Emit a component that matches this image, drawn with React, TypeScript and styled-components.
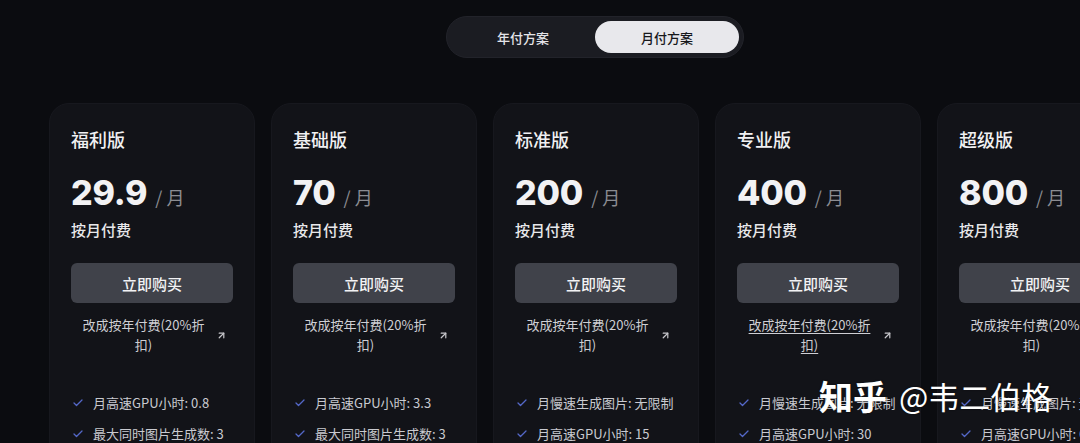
import React from "react";
import styled, { createGlobalStyle } from "styled-components";
import { Check, ArrowUpRight } from "lucide-react";

const Global = createGlobalStyle`
  html, body { margin: 0; padding: 0; background: #0b0c10; }
  body { font-family: Inter, "Noto Sans CJK SC", sans-serif; overflow: hidden; }
  * { box-sizing: border-box; }
`;

const Page = styled.div`
  position: relative;
  width: 1080px;
  height: 443px;
  overflow: hidden;
  background: #0b0c10;
  padding-top: 16px;
`;

const ToggleRow = styled.div`
  display: flex;
  padding-left: 446px;
`;

const Toggle = styled.div`
  display: flex;
  width: 298px;
  height: 42px;
  padding: 4px;
  border-radius: 21px;
  background: #1b1c22;
  border: 1px solid #22232a;
`;

const ToggleOption = styled.div<{ $active?: boolean }>`
  flex: 1;
  display: flex;
  align-items: center;
  justify-content: center;
  border-radius: 18px;
  font-family: "Noto Sans CJK SC", sans-serif;
  font-size: 13px;
  font-weight: 500;
  color: ${(p) => (p.$active ? "#17181c" : "#e4e4e8")};
  background: ${(p) => (p.$active ? "#e8e8ec" : "transparent")};
`;

const Cards = styled.div`
  display: flex;
  gap: 16px;
  padding-left: 49px;
  margin-top: 45px;
`;

const Card = styled.div`
  flex: 0 0 206px;
  height: 400px;
  border-radius: 20px;
  background: #121318;
  border: 1px solid #17181e;
  padding: 22px 21px 0 21px;
  display: flex;
  flex-direction: column;
`;

const Title = styled.div`
  font-family: "Noto Sans CJK SC", sans-serif;
  font-size: 18px;
  line-height: 26px;
  font-weight: 500;
  color: #f0f0f2;
`;

const PriceRow = styled.div`
  display: flex;
  align-items: baseline;
  margin-top: 19px;
  height: 44px;
`;

const Price = styled.span`
  font-family: Inter, sans-serif;
  font-size: 34px;
  line-height: 44px;
  font-weight: 800;
  color: #f2f2f4;
  letter-spacing: -0.2px;
`;

const Unit = styled.span`
  font-family: "Noto Sans CJK SC", sans-serif;
  font-size: 18px;
  color: #8b8c92;
  margin-left: 8px;
`;

const Billing = styled.div`
  font-family: "Noto Sans CJK SC", sans-serif;
  font-size: 15px;
  line-height: 22px;
  font-weight: 500;
  color: #e8e8ea;
  margin-top: 4px;
`;

const BuyButton = styled.button`
  margin-top: 22px;
  height: 40px;
  width: 100%;
  border: none;
  border-radius: 6px;
  background: #40424a;
  color: #f2f2f4;
  font-family: "Noto Sans CJK SC", sans-serif;
  font-size: 15px;
  font-weight: 500;
  cursor: pointer;
`;

const SwitchLink = styled.div<{ $hover?: boolean }>`
  margin-top: 12px;
  display: flex;
  align-items: center;
  justify-content: center;
  gap: 6px;
  color: #cfcfd4;
  font-family: "Noto Sans CJK SC", sans-serif;
  font-size: 13px;
  line-height: 20px;
  span {
    width: 132px;
    text-align: center;
    text-decoration: ${(p) => (p.$hover ? "underline" : "none")};
    text-underline-offset: 3px;
  }
`;

const Features = styled.ul`
  list-style: none;
  margin: 38px 0 0 0;
  padding: 0 0 0 1px;
  display: flex;
  flex-direction: column;
  gap: 11px;
`;

const Feature = styled.li`
  display: flex;
  align-items: center;
  gap: 9px;
  font-family: "Noto Sans CJK SC", sans-serif;
  font-size: 13px;
  line-height: 20px;
  color: #c9cad0;
  white-space: nowrap;
`;

const Watermark = styled.div`
  position: absolute;
  left: 819px;
  top: 374px;
  display: flex;
  align-items: center;
  gap: 12px;
  font-family: "Noto Sans CJK SC", sans-serif;
  line-height: 44px;
  color: #ffffff;
  text-shadow: 0 0 2px rgba(0, 0, 0, 0.4);
  white-space: nowrap;
`;

const WatermarkBrand = styled.span`
  font-size: 34px;
  font-weight: 700;
`;

const WatermarkName = styled.span`
  font-size: 31px;
  font-weight: 400;
`;

const plans = [
  { name: "福利版", price: "29.9", features: ["月高速GPU小时: 0.8", "最大同时图片生成数: 3"] },
  { name: "基础版", price: "70", features: ["月高速GPU小时: 3.3", "最大同时图片生成数: 3"] },
  { name: "标准版", price: "200", features: ["月慢速生成图片: 无限制", "月高速GPU小时: 15"] },
  { name: "专业版", price: "400", features: ["月慢速生成图片: 无限制", "月高速GPU小时: 30"], hover: true },
  { name: "超级版", price: "800", features: ["月慢速生成图片: 无限制", "月高速GPU小时: 60"] },
];

export default function App() {
  return (
    <Page>
      <Global />
      <ToggleRow>
        <Toggle>
          <ToggleOption>年付方案</ToggleOption>
          <ToggleOption $active>月付方案</ToggleOption>
        </Toggle>
      </ToggleRow>
      <Cards>
        {plans.map((p) => (
          <Card key={p.name}>
            <Title>{p.name}</Title>
            <PriceRow>
              <Price>{p.price}</Price>
              <Unit>/ 月</Unit>
            </PriceRow>
            <Billing>按月付费</Billing>
            <BuyButton>立即购买</BuyButton>
            <SwitchLink $hover={p.hover}>
              <span>改成按年付费(20%折扣)</span>
              <ArrowUpRight size={11} strokeWidth={2.6} color="#c8c8cc" />
            </SwitchLink>
            <Features>
              {p.features.map((f) => (
                <Feature key={f}>
                  <Check size={12} strokeWidth={2.6} color="#5468c8" />
                  {f}
                </Feature>
              ))}
            </Features>
          </Card>
        ))}
      </Cards>
      <Watermark>
        <WatermarkBrand>知乎</WatermarkBrand>
        <WatermarkName>@韦二伯格</WatermarkName>
      </Watermark>
    </Page>
  );
}
